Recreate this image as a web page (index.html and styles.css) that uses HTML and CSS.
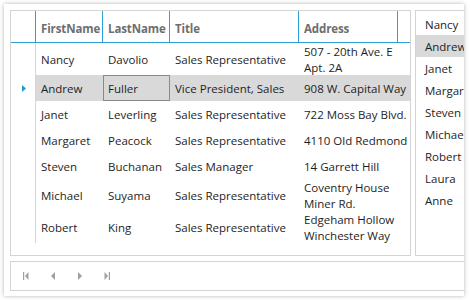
FILE: index.html
```html
<!DOCTYPE html>
<html lang="en">
<head>
  <meta charset="UTF-8" />
  <title>Employees Grid</title>
  <link rel="stylesheet" href="styles.css">
</head>
<body>
  <div class="panel">
    <div class="top">
      <div class="grid">
        <div class="grid-head">
          <div class="hcell"></div>
          <div class="hcell">FirstName</div>
          <div class="hcell">LastName</div>
          <div class="hcell">Title</div>
          <div class="hcell">Address</div>
        </div>
        <div class="grid-body">
          <div class="row tall">
            <div class="rh"></div>
            <div class="cell">Nancy</div>
            <div class="cell">Davolio</div>
            <div class="cell">Sales Representative</div>
            <div class="cell addr">507 - 20th Ave. E<br>Apt. 2A</div>
          </div>
          <div class="row selected">
            <div class="rh">
              <svg class="indicator" width="4" height="7" viewBox="0 0 4 7"><polygon points="0,0 4,3.5 0,7" /></svg>
            </div>
            <div class="cell">Andrew</div>
            <div class="cell current">Fuller</div>
            <div class="cell">Vice President, Sales</div>
            <div class="cell addr">908 W. Capital Way</div>
          </div>
          <div class="row">
            <div class="rh"></div>
            <div class="cell">Janet</div>
            <div class="cell">Leverling</div>
            <div class="cell">Sales Representative</div>
            <div class="cell addr">722 Moss Bay Blvd.</div>
          </div>
          <div class="row">
            <div class="rh"></div>
            <div class="cell">Margaret</div>
            <div class="cell">Peacock</div>
            <div class="cell">Sales Representative</div>
            <div class="cell addr">4110 Old Redmond Rd.</div>
          </div>
          <div class="row">
            <div class="rh"></div>
            <div class="cell">Steven</div>
            <div class="cell">Buchanan</div>
            <div class="cell">Sales Manager</div>
            <div class="cell addr">14 Garrett Hill</div>
          </div>
          <div class="row tall">
            <div class="rh"></div>
            <div class="cell">Michael</div>
            <div class="cell">Suyama</div>
            <div class="cell">Sales Representative</div>
            <div class="cell addr">Coventry House<br>Miner Rd.</div>
          </div>
          <div class="row tall">
            <div class="rh"></div>
            <div class="cell">Robert</div>
            <div class="cell">King</div>
            <div class="cell">Sales Representative</div>
            <div class="cell addr">Edgeham Hollow<br>Winchester Way</div>
          </div>
        </div>
      </div>

      <ul class="list">
        <li>Nancy</li>
        <li class="selected">Andrew</li>
        <li>Janet</li>
        <li>Margaret</li>
        <li>Steven</li>
        <li>Michael</li>
        <li>Robert</li>
        <li>Laura</li>
        <li>Anne</li>
      </ul>
    </div>

    <div class="pager">
      <span class="pager-btn">
        <svg width="6" height="8" viewBox="0 0 6 8"><rect x="0" y="0" width="1.2" height="8" /><polygon points="5.5,0 2,4 5.5,8" /></svg>
      </span>
      <span class="pager-btn">
        <svg width="4" height="8" viewBox="0 0 4 8"><polygon points="4,0 0,4 4,8" /></svg>
      </span>
      <span class="pager-btn">
        <svg width="4" height="8" viewBox="0 0 4 8"><polygon points="0,0 4,4 0,8" /></svg>
      </span>
      <span class="pager-btn">
        <svg width="6" height="8" viewBox="0 0 6 8"><polygon points="0.5,0 4,4 0.5,8" /><rect x="4.8" y="0" width="1.2" height="8" /></svg>
      </span>
    </div>
  </div>
</body>
</html>
```

FILE: styles.css
```css
html, body {
  margin: 0;
  background: #fff;
  font-family: "Open Sans", "Noto Sans", sans-serif;
  font-size: 11.5px;
  color: #1e1e1e;
}

.panel {
  margin: 4px;
  width: 460px;
  height: 292px;
  padding: 6px;
  box-sizing: border-box;
  background: #fff;
  box-shadow: 0 0 4px rgba(0, 0, 0, 0.3);
  overflow: hidden;
}

.top {
  display: flex;
  gap: 4px;
  height: 246px;
}

/* data grid */
.grid {
  flex: none;
  width: 401px;
  border: 1px solid #d4d4d4;
  box-sizing: border-box;
  overflow: hidden;
}
.grid-head {
  display: grid;
  grid-template-columns: 25px 67px 67px 129px 99px;
  height: 32px;
  border-bottom: 1px solid #2a9fd8;
  box-sizing: border-box;
}
.hcell {
  display: flex;
  align-items: center;
  padding: 3px 0 0 5px;
  border-right: 1px solid #2a9fd8;
  box-sizing: border-box;
  font-weight: bold;
  letter-spacing: -0.1px;
  color: #6e6e6e;
  white-space: nowrap;
  overflow: hidden;
}
.row {
  display: grid;
  grid-template-columns: 25px 67px 67px 129px 1fr;
  height: 26px;
}
.row.tall {
  height: 32px;
}
.rh {
  display: flex;
  align-items: center;
  justify-content: center;
  padding-left: 2px;
  border-right: 1px solid #d5d5d5;
  box-sizing: border-box;
  background: #fff;
}
.indicator {
  fill: #1b9ad8;
}
.cell {
  display: flex;
  align-items: center;
  padding: 2px 0 0 5px;
  white-space: nowrap;
  overflow: hidden;
  line-height: 16px;
}
.row.selected .cell {
  background: #d9d9d9;
}
.cell.current {
  border: 1px solid #8a8a8a;
  padding: 1px 0 0 4px;
}

/* side list */
.list {
  flex: none;
  width: 70px;
  margin: 0;
  padding: 2px 0 0;
  list-style: none;
  border: 1px solid #d4d4d4;
  box-sizing: border-box;
}
.list li {
  height: 22px;
  line-height: 23px;
  padding-left: 9px;
  white-space: nowrap;
}
.list li.selected {
  background: #d9d9d9;
}

/* pager */
.pager {
  display: flex;
  align-items: center;
  margin-top: 5px;
  height: 30px;
  width: 470px;
  padding-left: 1px;
  border: 1px solid #d4d4d4;
  box-sizing: border-box;
}
.pager-btn {
  display: flex;
  justify-content: center;
  width: 27px;
}
.pager-btn svg {
  fill: #a0a0a0;
}
```
